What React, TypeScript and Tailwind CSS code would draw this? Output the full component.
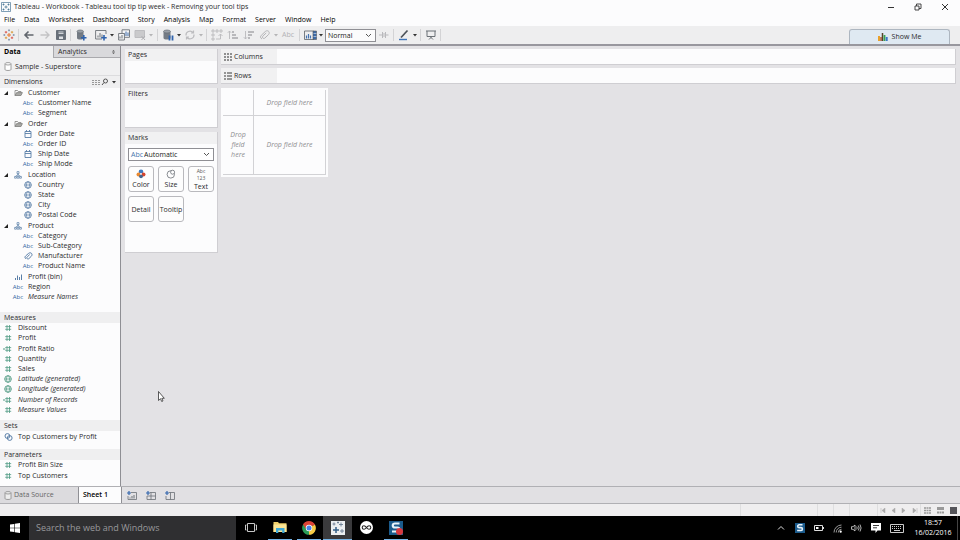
import React from 'react';

type FieldIcon = 'abc' | 'date' | 'globe' | 'geo' | 'folder' | 'tree' | 'clip' | 'bin' | 'num' | 'calc' | 'set';

interface Field {
    name: string;
    icon: FieldIcon;
    group?: boolean;
    child?: boolean;
    italic?: boolean;
}

const BLUE = '#5a7fa8';
const GREEN = '#4f9a83';

const dimensions: Field[] = [
    { name: 'Customer', icon: 'folder', group: true },
    { name: 'Customer Name', icon: 'abc', child: true },
    { name: 'Segment', icon: 'abc', child: true },
    { name: 'Order', icon: 'folder', group: true },
    { name: 'Order Date', icon: 'date', child: true },
    { name: 'Order ID', icon: 'abc', child: true },
    { name: 'Ship Date', icon: 'date', child: true },
    { name: 'Ship Mode', icon: 'abc', child: true },
    { name: 'Location', icon: 'tree', group: true },
    { name: 'Country', icon: 'globe', child: true },
    { name: 'State', icon: 'globe', child: true },
    { name: 'City', icon: 'globe', child: true },
    { name: 'Postal Code', icon: 'globe', child: true },
    { name: 'Product', icon: 'tree', group: true },
    { name: 'Category', icon: 'abc', child: true },
    { name: 'Sub-Category', icon: 'abc', child: true },
    { name: 'Manufacturer', icon: 'clip', child: true },
    { name: 'Product Name', icon: 'abc', child: true },
    { name: 'Profit (bin)', icon: 'bin' },
    { name: 'Region', icon: 'abc' },
    { name: 'Measure Names', icon: 'abc', italic: true },
];

const measures: Field[] = [
    { name: 'Discount', icon: 'num' },
    { name: 'Profit', icon: 'num' },
    { name: 'Profit Ratio', icon: 'calc' },
    { name: 'Quantity', icon: 'num' },
    { name: 'Sales', icon: 'num' },
    { name: 'Latitude (generated)', icon: 'geo', italic: true },
    { name: 'Longitude (generated)', icon: 'geo', italic: true },
    { name: 'Number of Records', icon: 'calc', italic: true },
    { name: 'Measure Values', icon: 'num', italic: true },
];

const parameters: Field[] = [
    { name: 'Profit Bin Size', icon: 'num' },
    { name: 'Top Customers', icon: 'num' },
];

const menus = ['File', 'Data', 'Worksheet', 'Dashboard', 'Story', 'Analysis', 'Map', 'Format', 'Server', 'Window', 'Help'];

function Svg({ w = 12, h = 12, color = '#6b7076', children }: { w?: number; h?: number; color?: string; children: React.ReactNode }) {
    return (
        <svg width={w} height={h} viewBox={`0 0 ${w} ${h}`} fill="none" stroke={color} className="shrink-0" aria-hidden="true">
            {children}
        </svg>
    );
}

function FieldGlyph({ icon }: { icon: FieldIcon }) {
    switch (icon) {
        case 'abc':
            return <span className="text-[6px] leading-none text-[#2f62a0]">Abc</span>;
        case 'date':
            return (
                <Svg w={8} h={8} color={BLUE}>
                    <path d="M1 1.5h6v6H1zM1 3.5h6M2.5 0v2M5.5 0v2" strokeWidth=".9" />
                </Svg>
            );
        case 'globe':
        case 'geo':
            return (
                <Svg w={8} h={8} color={icon === 'geo' ? GREEN : BLUE}>
                    <circle cx="4" cy="4" r="3.3" strokeWidth=".9" />
                    <ellipse cx="4" cy="4" rx="1.5" ry="3.3" strokeWidth=".7" />
                    <path d="M.7 4h6.6" strokeWidth=".7" />
                </Svg>
            );
        case 'folder':
            return (
                <Svg w={9} h={8} color="#80807e">
                    <path d="M1 6.5v-5h2.5l.8 1H7V4" strokeWidth=".8" />
                    <path d="M1 6.5L2.6 3.6h5.8L7 6.5z" fill="#a9a9a6" strokeWidth=".8" />
                </Svg>
            );
        case 'tree':
            return (
                <Svg w={8} h={8} color={BLUE}>
                    <path d="M3 .6h2v2H3zM.6 5.4h1.8v1.8H.6zM3.1 5.4h1.8v1.8H3.1zM5.6 5.4h1.8v1.8H5.6zM4 2.6v2.8M1.5 5.4L4 3.4l2.5 2" strokeWidth=".7" />
                </Svg>
            );
        case 'clip':
            return (
                <Svg w={9} h={8} color={BLUE}>
                    <path d="M2 6.9C.6 6 .8 4.8 1.6 4L4.4 1.5C5.6.5 7 .6 7.7 1.6c.6 1 .3 2-.5 2.8L4.9 6.6c-.7.6-1.7.4-2-.2-.4-.6-.1-1.2.4-1.6l2.4-2.2" />
                </Svg>
            );
        case 'bin':
            return (
                <Svg w={9} h={8} color={BLUE}>
                    <path d="M1.5 7V5M3.5 7V2.5M5.500 7V4M7.5 7V1.5" />
                </Svg>
            );
        case 'set':
            return (
                <Svg w={9} h={8} color={BLUE}>
                    <circle cx="3.4" cy="3" r="2.4" />
                    <circle cx="5.7" cy="5" r="2.4" />
                </Svg>
            );
        default:
            return (
                <Svg w={10} h={8} color={GREEN}>
                    <path d="M4 1v6M6.500 1v6M2.200 2.600h6M2.200 5.300h6" strokeWidth=".8" />
                    {icon === 'calc' && <path d="M0 4h2.2" strokeWidth="1" />}
                </Svg>
            );
    }
}

function FieldRow({ field, indent }: { field: Field; indent: boolean }) {
    return (
        <li className={`flex min-h-0 items-center ${field.child ? 'pl-[22px]' : indent ? 'pl-1' : 'pl-[2px]'}`}>
            {indent && !field.child && (
                <span className="w-2">
                    {field.group && (
                        <svg width="4" height="4" viewBox="0 0 4 4"><path d="M4 0v4H0z" fill="#222" /></svg>
                    )}
                </span>
            )}
            <span className="flex w-3 shrink-0 justify-center">
                <FieldGlyph icon={field.icon} />
            </span>
            <span className={`pl-1 whitespace-nowrap ${field.italic ? 'italic' : ''}`}>{field.name}</span>
        </li>
    );
}

function SectionTitle({ children }: { children: React.ReactNode }) {
    return <h2 className="flex h-[11px] shrink-0 items-center bg-[#efeff0] px-1">{children}</h2>;
}

function Tool({ label, children }: { label: string; children: React.ReactNode }) {
    return (
        <button aria-label={label} className="flex h-4 w-4 shrink-0 items-center justify-center">
            {children}
        </button>
    );
}

function Caret({ dim = false }: { dim?: boolean }) {
    return (
        <svg width="5" height="4" viewBox="0 0 5 4" className="shrink-0">
            <path d="M1 1h4L3 3.5z" fill={dim ? '#b4b4b6' : '#333'} />
        </svg>
    );
}

function Divider() {
    return <span className="mr-[2px] ml-px h-3 w-px shrink-0 bg-[#d3d3d5]" />;
}

function Chevron() {
    return (
        <svg width="7" height="5" viewBox="0 0 7 5" fill="none" className="pointer-events-none absolute top-1 right-1">
            <path d="M1 1l2.5 2.5L6 1" stroke="#555" />
        </svg>
    );
}

function Toolbar() {
    return (
        <div className="flex h-5 shrink-0 items-center border-b-2 border-[#98979e] bg-[#eeeeef] pl-px">
            <Tool label="Start page">
                <Svg>
                    <path d="M6 4v4M4 6h4" stroke="#e8762c" />
                    <path d="M3 2v2.4M1.8 3.2h2.4M9 7.6V10M7.8 8.8h2.4" stroke="#d9534a" strokeWidth=".9" />
                    <path d="M9 2v2.4M7.8 3.2h2.4M3 7.6V10M1.8 8.8h2.4" stroke="#d99a3a" strokeWidth=".9" />
                    <path d="M6 .3v2M5 1.3h2M6 9.7v2M5 10.7h2M1.3 5v2M.3 6h2M10.7 5v2M9.7 6h2" stroke="#6b82a0" strokeWidth=".7" />
                </Svg>
            </Tool>
            <Divider />
            <Tool label="Back">
                <Svg color="#62676e"><path d="M10.5 6H2M5.5 2.5L2 6l3.5 3.5" strokeWidth="1.6" /></Svg>
            </Tool>
            <Tool label="Forward">
                <Svg color="#c3c3c5"><path d="M1.5 6H10M6.5 2.5L10 6 6.5 9.5" strokeWidth="1.4" /></Svg>
            </Tool>
            <Tool label="Save">
                <Svg w={10} h={10}>
                    <path d="M.5.5h9v9h-9z" fill="#68707a" stroke="#68707a" />
                    <path d="M2.5 2h5M2.5 3.5h5" stroke="#cfd3d8" />
                    <path d="M3 6.5h4V9H3z" fill="#dde0e4" stroke="none" />
                </Svg>
            </Tool>
            <Divider />
            <Tool label="New data source">
                <Svg>
                    <path d="M2 2.5V9c0 2 6.500 2 6.500 0V2.5" fill="#747b84" stroke="none" />
                    <ellipse cx="5.2" cy="2.5" rx="3.2" ry="1.5" fill="#9aa0a7" stroke="#636a73" strokeWidth=".7" />
                    <path d="M8.800 6v5.500M6 8.800h5.500" stroke="#2f63ad" strokeWidth="1.6" />
                </Svg>
            </Tool>
            <span className="w-1" />
            <Tool label="New worksheet">
                <Svg>
                    <path d="M11 5V1.5H.6V10H7" strokeWidth=".9" />
                    <path d="M3 8.500v-2M5 8.500V4M7 8.500V5.500" />
                    <path d="M9 6v5.500M6.200 8.800h5.500" stroke="#2f63ad" strokeWidth="1.6" />
                </Svg>
            </Tool>
            <Caret />
            <span className="w-[2px]" />
            <Tool label="Duplicate sheet">
                <Svg>
                    <path d="M4 .8h7.500v7.500H4z" fill="#f6f6f7" strokeWidth=".9" />
                    <path d="M6 7V4M8 7V2.500M10 7V3.500" stroke="#3d6ba8" />
                    <path d="M.6 4.500h5.800v6.500H.6z" fill="#f6f6f7" strokeWidth=".9" />
                    <path d="M2 9.500V7.500M4 9.500V6" />
                </Svg>
            </Tool>
            <Tool label="Clear sheet">
                <Svg color="#bdbdc0">
                    <path d="M1 1.5h9.5v7H1z" fill="#cacacc" />
                    <path d="M7.500 7l3.500 4M11 7l-3.500 4" stroke="#b0b0b3" />
                </Svg>
            </Tool>
            <Caret dim />
            <span className="w-[3px]" />
            <Divider />
            <Tool label="Pause updates">
                <Svg>
                    <path d="M1.500 2.500V9c0 2 7 2 7 0V2.500" fill="#747b84" stroke="none" />
                    <ellipse cx="5" cy="2.5" rx="3.4" ry="1.5" fill="#9aa0a7" stroke="#636a73" strokeWidth=".7" />
                    <path d="M7.500 6.500v5M10.500 6.500v5" stroke="#2f63ad" strokeWidth="1.8" />
                </Svg>
            </Tool>
            <Caret />
            <span className="w-px" />
            <Tool label="Run update">
                <Svg color="#bcbcbf">
                    <path d="M2 6.500a4 4 0 0 1 7-3M10 5.500a4 4 0 0 1-7 3M9.500 1.500V4H7M2.500 10.500V8H5" strokeWidth="1.2" />
                </Svg>
            </Tool>
            <Caret dim />
            <span className="w-[2px]" />
            <Divider />
            <Tool label="Swap rows and columns">
                <Svg color="#b9b9bc">
                    <path d="M1 1h2v2H1zM5 1h2v2H5zM9 1h2v2H9zM1 5h2v2H1zM1 9h2v2H1zM5 10h4.500V5M7.500 7l2-2 2 2" strokeWidth=".9" />
                </Svg>
            </Tool>
            <Tool label="Sort ascending">
                <Svg color="#b9b9bc">
                    <path d="M2.500 10V2M.8 3.800L2.500 2l1.700 1.800" strokeWidth=".9" />
                    <path d="M5 3h2M5 6h4M5 9h6" strokeWidth="1.8" />
                </Svg>
            </Tool>
            <Tool label="Sort descending">
                <Svg color="#b9b9bc">
                    <path d="M2.500 2v8M.8 8.200L2.500 10l1.700-1.800" strokeWidth=".9" />
                    <path d="M5 3h6M5 6h4M5 9h2" strokeWidth="1.8" />
                </Svg>
            </Tool>
            <Tool label="Group members">
                <Svg color="#b4b4b7">
                    <path d="M3 10C1 9 1.300 7.300 2.300 6.300l4-3.800c1.300-1.200 3-.8 3.600.2.700 1.200.2 2.300-.6 3.100l-3.500 3.300c-.8.700-1.900.3-2.200-.3-.3-.8 0-1.500.5-2l3.100-2.800" />
                </Svg>
            </Tool>
            <Caret dim />
            <span className="w-[2px]" />
            <Tool label="Show mark labels">
                <span className="text-[7px] text-[#b2b2b5]">Abc</span>
            </Tool>
            <span className="w-[2px]" />
            <Divider />
            <Tool label="Show cards">
                <Svg w={13} h={10}>
                    <path d="M.5 1h9v8.500h-9z" strokeWidth=".9" />
                    <path d="M2.500 8.500v-3M4.500 8.500V4M6.500 8.500V5.500" stroke="#4474b2" strokeWidth="1.2" />
                    <path d="M9 1h3.500v8.500H9z" fill="#3d6ba8" stroke="#555" strokeWidth=".6" />
                    <path d="M9.500 3.500h3M9.500 6.500h3" stroke="#ccd6e4" strokeWidth=".7" />
                </Svg>
            </Tool>
            <Caret />
            <span className="w-[2px]" />
            <span className="relative">
                <select aria-label="Fit" className="block h-[13px] w-[51px] appearance-none border border-[#8f8f94] bg-[#fbfbfc] pl-[2px] text-[7px] leading-[9px] text-[#222]">
                    <option>Normal</option>
                    <option>Fit Width</option>
                    <option>Fit Height</option>
                    <option>Entire View</option>
                </select>
                <Chevron />
            </span>
            <Tool label="Fix axes">
                <Svg w={10} h={8} color="#b9b9bc"><path d="M0 4h3M3.500 1v6M3.500 3h3v2h-3M6.500 4h3M6.500 1v6" /></Svg>
            </Tool>
            <Divider />
            <Tool label="Highlight">
                <Svg>
                    <path d="M3 8.500L9.500 1.500" stroke="#4b5158" strokeWidth="1.7" />
                    <path d="M1 10.500h8" stroke="#3f74b8" strokeWidth="1.4" />
                </Svg>
            </Tool>
            <Caret />
            <span className="w-[2px]" />
            <Divider />
            <Tool label="Presentation mode">
                <Svg w={10} h={10}><path d="M0 1h10M1 1v5.500h8V1M5 6.500V8M3 9.500L5 7.500l2 2" /></Svg>
            </Tool>
            <Divider />
            <button className="mr-[10px] ml-auto flex h-[15px] w-[101px] items-center justify-center gap-1 self-end rounded-t-[3px] border border-b-0 border-[#adb6c0] bg-[#dfe9f2]">
                <Svg w={10} h={8}>
                    <path d="M1 8V3" stroke="#e9a12c" strokeWidth="2" />
                    <path d="M3 8V4" stroke="#b85228" strokeWidth="1.4" />
                    <path d="M4.500 8V0" stroke="#554428" strokeWidth="1.5" />
                    <path d="M6.500 8V2" stroke="#39a253" strokeWidth="1.8" />
                    <path d="M8.700 8V4" stroke="#3d79c8" strokeWidth="2" />
                </Svg>
                Show Me
            </button>
        </div>
    );
}

function DataPane() {
    return (
        <aside className="flex w-[121px] shrink-0 flex-col border-r border-[#8f8f94] bg-[#fcfcfd]">
            <div className="flex h-3 shrink-0 bg-[#f0f0f1]">
                <button className="w-[53px] pl-1 text-left font-bold text-black">Data</button>
                <button className="flex flex-1 items-center justify-between border-b border-l border-[#a9a9ad] bg-[#d9d9dc] px-1">
                    Analytics
                    <svg width="5" height="6" viewBox="0 0 5 6"><path d="M1 2.500L2.500 1 4 2.500zM1 3.500L2.500 5 4 3.500z" fill="#555" /></svg>
                </button>
            </div>
            <div className="flex h-[18px] shrink-0 items-center border-b border-[#dcdcde] bg-[#f0f0f1] pl-1">
                <Svg w={8} h={9} color="#888">
                    <path d="M1 2v5.500c0 1.300 6 1.300 6 0V2" fill="#fff" strokeWidth=".8" />
                    <ellipse cx="4" cy="1.8" rx="3" ry="1.2" fill="#fff" strokeWidth=".8" />
                </Svg>
                <span className="pl-[3px]">Sample - Superstore</span>
            </div>
            <div className="flex h-3 shrink-0 items-center bg-[#efeff0] px-1">
                <h2 className="flex-1">Dimensions</h2>
                <button aria-label="View data" className="w-[9px]">
                    <Svg w={8} h={7} color="#999"><path d="M0 1.500h8M0 3.500h8M0 5.500h8" strokeDasharray="2 1" /></Svg>
                </button>
                <button aria-label="Find field" className="w-[10px]">
                    <Svg w={8} h={8} color="#555"><circle cx="4.5" cy="3" r="2" /><path d="M3 4.500L1 7" /></Svg>
                </button>
                <Caret />
            </div>
            <ul className="grid h-[214px] shrink-0 auto-rows-fr">
                {dimensions.map(f => <FieldRow key={f.name} field={f} indent />)}
            </ul>
            <div className="flex-1" />
            <SectionTitle>Measures</SectionTitle>
            <ul className="mb-[5px] grid h-[92px] shrink-0 auto-rows-fr">
                {measures.map(f => <FieldRow key={f.name} field={f} indent={false} />)}
            </ul>
            <SectionTitle>Sets</SectionTitle>
            <ul className="mb-[6px] grid h-3 shrink-0">
                <FieldRow field={{ name: 'Top Customers by Profit', icon: 'set' }} indent={false} />
            </ul>
            <SectionTitle>Parameters</SectionTitle>
            <ul className="mb-[5px] grid h-[21px] shrink-0 auto-rows-fr">
                {parameters.map(f => <FieldRow key={f.name} field={f} indent={false} />)}
            </ul>
        </aside>
    );
}

function Card({ title, className, children }: { title: string; className: string; children?: React.ReactNode }) {
    return (
        <section className={`border-r border-b border-[#cfced2] bg-[#fcfcfd] ${className}`}>
            <h2 className="flex h-3 items-center bg-[#f1f1f2] pl-[3px]">{title}</h2>
            {children}
        </section>
    );
}

function MarkButton({ label, children }: { label: string; children?: React.ReactNode }) {
    return (
        <button className="flex h-[26px] flex-col items-center justify-center rounded-[3px] border border-[#b9b9bd] bg-[#fdfdfd] leading-[9px]">
            {children}
            <span>{label}</span>
        </button>
    );
}

function MarksCard() {
    return (
        <Card title="Marks" className="h-[121px]">
            <div className="px-[3px] pt-1">
                <div className="relative">
                    <span className="pointer-events-none absolute top-[2px] left-[3px] text-[7px] leading-[9px] text-[#4a78ad]">Abc</span>
                    <select aria-label="Mark type" className="block h-[13px] w-full appearance-none border border-[#8f8f94] bg-white pl-[15px] text-[7px] leading-[9px] text-[#222]">
                        <option>Automatic</option>
                        <option>Bar</option>
                        <option>Line</option>
                    </select>
                    <Chevron />
                </div>
                <div className="mt-[5px] grid grid-cols-3 gap-1">
                    <MarkButton label="Color">
                        <Svg w={10} h={11}>
                            <circle cx="5" cy="2.8" r="2.3" fill="#3f7ac0" stroke="none" />
                            <circle cx="2.6" cy="5.5" r="2.1" fill="#e98a32" stroke="none" />
                            <circle cx="7.4" cy="5.5" r="2.1" fill="#d4452f" stroke="none" />
                            <circle cx="5" cy="7.3" r="1.9" fill="#44658f" stroke="none" />
                            <circle cx="5" cy="4.8" r=".9" fill="#fff" stroke="none" />
                        </Svg>
                    </MarkButton>
                    <MarkButton label="Size">
                        <Svg w={10} h={11}>
                            <circle cx="4.8" cy="5.4" r="3.7" strokeWidth=".8" />
                            <circle cx="6.6" cy="3.2" r="2" fill="#fff" strokeWidth=".8" />
                        </Svg>
                    </MarkButton>
                    <MarkButton label="Text">
                        <span className="flex flex-col text-[5px] leading-[7px] text-[#555]">
                            <span>Abc</span>
                            <span>123</span>
                        </span>
                    </MarkButton>
                    <MarkButton label="Detail" />
                    <MarkButton label="Tooltip" />
                </div>
            </div>
        </Card>
    );
}

function Shelf({ label, children }: { label: string; children: React.ReactNode }) {
    return (
        <div className="flex h-4 border-r border-b border-[#cfced2] bg-[#fcfcfd]">
            <div className="flex w-14 items-center gap-[2px] bg-[#f1f1f2] pl-[3px]">
                {children}
                {label}
            </div>
        </div>
    );
}

function Workspace() {
    return (
        <main className="flex min-w-0 flex-1 gap-[3px] bg-[#e3e2e5] px-1 pt-[3px]">
            <div className="flex w-[93px] shrink-0 flex-col gap-1">
                <Card title="Pages" className="h-[35px]" />
                <Card title="Filters" className="h-10" />
                <MarksCard />
            </div>
            <div className="flex min-w-0 flex-1 flex-col gap-[3px]">
                <Shelf label="Columns">
                    <Svg w={8} h={8} color="#777"><path d="M1 0v8M4 0v8M7 0v8" strokeWidth="1.6" strokeDasharray="2 1" /></Svg>
                </Shelf>
                <Shelf label="Rows">
                    <Svg w={8} h={8} color="#777"><path d="M0 1h2M3 1h5M0 4h2M3 4h5M0 7h2M3 7h5" strokeWidth="1.4" /></Svg>
                </Shelf>
                <div className="mt-px grid h-[89px] w-[107px] grid-cols-[31px_1fr] grid-rows-[26px_1fr] border-2 border-[#fcfcfd] bg-[#fcfcfd] text-center text-[#8d8d90] italic">
                    <div className="border-r border-b border-[#d2d2d5]" />
                    <div className="flex items-center justify-center border-r border-b border-[#d2d2d5]">Drop field here</div>
                    <div className="flex items-center justify-center border-r border-b border-[#d2d2d5] px-1 leading-[10px]">Drop field here</div>
                    <div className="flex items-center justify-center border-r border-b border-[#d2d2d5]">Drop field here</div>
                </div>
            </div>
        </main>
    );
}

function SheetTabs() {
    return (
        <div className="flex h-[18px] shrink-0 items-stretch border-t border-b border-[#b0b0b4] bg-[#e1e0e3]">
            <button className="flex w-[79px] items-center gap-[2px] border-r border-[#8f8f94] bg-[#dcdbde] pl-1 text-[#666]">
                <Svg w={8} h={9} color="#888">
                    <path d="M1 2v5.500c0 1.300 6 1.300 6 0V2" fill="#eee" strokeWidth=".8" />
                    <ellipse cx="4" cy="1.8" rx="3" ry="1.2" fill="#eee" strokeWidth=".8" />
                </Svg>
                Data Source
            </button>
            <button className="w-[43px] border-r border-[#8f8f94] bg-[#fcfcfd] pl-1 text-left font-semibold text-black">Sheet 1</button>
            <div className="flex items-center gap-[9px] pl-[5px]">
                {['New worksheet', 'New dashboard', 'New story'].map((label, i) => (
                    <button key={label} aria-label={label}>
                        <Svg w={10} h={9}>
                            <path d="M4 1.500h5.500v7H1V5" strokeWidth=".8" />
                            <path d="M2 0v4M0 2h4" stroke="#3567ad" strokeWidth="1.2" />
                            {i === 0 && <path d="M3 7.500v-1M5 7.500V5M7 7.500V4" />}
                            {i === 1 && <path d="M5 1.500v7M1 5h8.500" strokeWidth=".8" />}
                            {i === 2 && <path d="M5.500 1.500v7" strokeWidth=".8" />}
                        </Svg>
                    </button>
                ))}
            </div>
        </div>
    );
}

function StatusBar() {
    return (
        <div className="flex h-3 shrink-0 items-center justify-end bg-[#efeeef]">
            <span className="h-full w-[77px] border-l border-[#dededf]" />
            <span className="h-full w-4 border-l border-[#dededf]" />
            <span className="h-full w-4 border-l border-[#dededf]" />
            <span className="h-full w-7 border-l border-[#dededf]" />
            <div className="flex h-full w-[43px] items-center justify-around border-l border-[#dededf]">
                {['M1 0v5M5 0v5L2 2.5z', 'M4 0v5L1 2.5z', 'M1 0v5l3-2.5z', 'M1 0v5l3-2.5zM5 0v5'].map(d => (
                    <Svg key={d} w={6} h={5} color="#aaa"><path d={d} fill="#aaa" strokeWidth=".5" /></Svg>
                ))}
            </div>
            <div className="flex h-full w-10 items-center justify-around border-l border-[#dededf]">
                <Svg w={7} h={7} color="#999"><path d="M0 1h7M0 3.500h7M0 6h7" strokeWidth="1.5" strokeDasharray="2 .5" /></Svg>
                <Svg w={7} h={7} color="#999"><path d="M0 1.500h7" strokeWidth="3" /><path d="M0 5.500h7" strokeWidth="2" strokeDasharray="2 .5" /></Svg>
                <span className="h-[7px] w-[7px] bg-[#55555a]" />
            </div>
        </div>
    );
}

function Task({ label, running = false, active = false, children }: { label: string; running?: boolean; active?: boolean; children: React.ReactNode }) {
    return (
        <button aria-label={label} className={`flex w-[29px] flex-col items-center ${active ? 'bg-[#3a3a3c]' : ''}`}>
            <span className="flex flex-1 items-center">{children}</span>
            <span className={`h-px ${active ? 'w-full' : 'w-6'} ${running ? 'bg-[#76b5e8]' : ''}`} />
        </button>
    );
}

function SnagitIcon({ size, badge = false }: { size: number; badge?: boolean }) {
    return (
        <svg width={size} height={size} viewBox="0 0 14 14" fill="none">
            <path d="M0 0h14v14H0z" fill="#1b5b8c" />
            <path d="M10.500 2.500H6c-3 0-3 4 0 4h2.500c2.500 0 2.500 4 0 4H3" stroke="#e9f3fa" strokeWidth="2.2" />
            {badge && <circle cx="10.5" cy="10.5" r="3.5" fill="#d9383f" />}
        </svg>
    );
}

function Tray({ label, children }: { label: string; children: React.ReactNode }) {
    return <button aria-label={label} className="flex w-[19px] items-center justify-center">{children}</button>;
}

function Taskbar() {
    return (
        <footer className="flex h-6 shrink-0 bg-black text-white">
            <button aria-label="Start" className="flex w-[29px] items-center justify-center">
                <svg width="10" height="10" viewBox="0 0 10 10" fill="#fff">
                    <path d="M0 1.500l4.200-.6v3.800H0zM4.800.8L10 0v4.700H4.800zM0 5.300h4.200v3.800L0 8.500zM4.800 5.300H10V10l-5.200-.8z" />
                </svg>
            </button>
            <input
                type="text"
                aria-label="Search"
                placeholder="Search the web and Windows"
                className="w-[207px] bg-[#2f2f31] px-[7px] text-[9px] text-white placeholder:text-[#98989b]"
            />
            <Task label="Task view">
                <Svg w={12} h={9} color="#ddd"><path d="M2.500.5h7v8h-7zM1.500 2H.5v5h1M10.500 2h1v5h-1" strokeWidth=".9" /></Svg>
            </Task>
            <Task label="File Explorer" running>
                <svg width="14" height="13" viewBox="0 0 14 13">
                    <path d="M.5 1H5l1 1.200h7.500V11H.5z" fill="#f0cf6a" />
                    <path d="M.5 3.500h13V11H.5z" fill="#fbe596" />
                    <path d="M3 7h8.500v5H9.200V9.500H5.300V12H3z" fill="#3fa9d8" />
                </svg>
            </Task>
            <Task label="Chrome" running>
                <svg width="14" height="14" viewBox="0 0 14 14">
                    <path d="M7 7L1.100 3.600A6.800 6.800 0 0 1 12.900 3.600z" fill="#db4437" />
                    <path d="M7 7L1.100 3.600A6.800 6.800 0 0 0 7 13.800z" fill="#2b9d58" />
                    <path d="M7 7l5.900-3.400A6.800 6.800 0 0 1 7 13.800z" fill="#f7cb45" />
                    <path d="M7 3.900h5.900A6.800 6.800 0 0 0 1.100 3.600L4 8z" fill="#db4437" />
                    <circle cx="7" cy="7" r="3.2" fill="#fff" />
                    <circle cx="7" cy="7" r="2.5" fill="#4a82e8" />
                </svg>
            </Task>
            <Task label="Tableau" running active>
                <Svg w={14} h={14} color="#6b7e93">
                    <path d="M0 0h14v14H0z" fill="#eceff1" stroke="none" />
                    <path d="M5 6v6M2 9h6" stroke="#346087" strokeWidth="1.5" />
                    <path d="M3 1.500v3M1.500 3h3M10 1.500v4M8 3.500h4M11 8v4M9 10h4M7 .5v2M6 1.500h2" strokeWidth=".9" />
                </Svg>
            </Task>
            <Task label="Camtasia">
                <Svg w={13} h={13} color="#222">
                    <circle cx="6.5" cy="6.5" r="6.5" fill="#fff" stroke="none" />
                    <path d="M6.500 6.500C5.300 5 4.700 4.700 4 4.700a1.800 1.800 0 0 0 0 3.600c.7 0 1.300-.3 2.500-1.800S8.300 4.700 9 4.700a1.800 1.800 0 0 1 0 3.600c-.7 0-1.300-.3-2.500-1.800z" strokeWidth="1.1" />
                </Svg>
            </Task>
            <Task label="Snagit" running><SnagitIcon size={14} badge /></Task>
            <div className="ml-auto flex">
                <Tray label="Show hidden icons"><Svg w={8} h={6} color="#ddd"><path d="M1 4.500l3-3 3 3" /></Svg></Tray>
                <Tray label="Snagit"><SnagitIcon size={10} /></Tray>
                <Tray label="Battery">
                    <Svg w={10} h={6} color="#ddd"><path d="M.5.5h8v5h-8zM9.500 2v2" /><path d="M2 2h2.500v2H2z" fill="#fff" stroke="none" /></Svg>
                </Tray>
                <Tray label="Network">
                    <Svg w={9} h={9} color="#999">
                        <path d="M1 8.500A7.500 7.500 0 0 1 8.500 1M3.200 8.500a5.300 5.300 0 0 1 5.300-5.300M5.300 8.500a3.200 3.200 0 0 1 3.200-3.200" />
                        <circle cx="7.7" cy="7.7" r="1.1" fill="#fff" stroke="none" />
                    </Svg>
                </Tray>
                <Tray label="Volume">
                    <Svg w={11} h={8} color="#ddd"><path d="M.5 2.700H2L4 1v6L2 5.300H.5zM5.700 2.500q1 1.500 0 3M7.300 1.500q1.700 2.500 0 5M9 .5q2.200 3.500 0 7" strokeWidth=".8" /></Svg>
                </Tray>
                <Tray label="Notifications">
                    <Svg w={10} h={10} color="#222">
                        <path d="M0 0h10v7.500H6.500L4.500 10V7.500H0z" fill="#fff" stroke="none" />
                        <path d="M2 2.500h6M2 4.800h4" strokeWidth=".9" />
                    </Svg>
                </Tray>
                <button aria-label="Touch keyboard" className="flex w-6 items-center justify-center">
                    <Svg w={14} h={9} color="#ccc">
                        <path d="M.5.5h13v8H.5z" />
                        <path d="M2 2.500h10M2 4.500h10" strokeDasharray="1 1" />
                        <path d="M4 6.500h6" />
                    </Svg>
                </button>
                <button className="flex w-[48px] flex-col items-center justify-center text-[7px] leading-[10px]">
                    <span>18:57</span>
                    <span>16/02/2016</span>
                </button>
                <span className="w-[3px] border-l border-[#444]" />
            </div>
        </footer>
    );
}

export default function App() {
    return (
        <div className="flex h-screen flex-col overflow-hidden bg-[#fcfcfd] font-['Open_Sans','Noto_Sans',sans-serif] text-[7px] leading-[10px] text-[#2a2a2c]">
            <header className="flex h-[13px] shrink-0 items-center pl-px">
                <Svg w={10} h={10} color="#4a7796">
                    <path d="M.5.5h9v9h-9z" strokeWidth=".7" />
                    <path d="M5 3.500v3M3.500 5h3M2.500 1.500v2M1.500 2.500h2M7.500 1.500v2M6.500 2.500h2M2.500 6.500v2M1.500 7.500h2M7.500 6.500v2M6.500 7.500h2" strokeWidth=".8" />
                </Svg>
                <h1 className="pl-[3px]">Tableau - Workbook - Tableau tool tip tip week - Removing your tool tips</h1>
                <div className="mr-[9px] ml-auto flex gap-[17px]">
                    <button aria-label="Minimize" className="w-[10px]"><Svg w={8} h={8} color="#333"><path d="M1 4.500h6" /></Svg></button>
                    <button aria-label="Restore" className="w-[10px]"><Svg w={8} h={8} color="#333"><path d="M1 3h4v4H1zM2.500 3V1H7v4.500H5" strokeWidth=".9" /></Svg></button>
                    <button aria-label="Close" className="w-[10px]"><Svg w={8} h={8} color="#333"><path d="M1 1l6 6M7 1L1 7" /></Svg></button>
                </div>
            </header>
            <nav className="flex h-[13px] shrink-0 items-center gap-[9px] pl-1 text-black">
                {menus.map(m => <button key={m}>{m}</button>)}
            </nav>
            <Toolbar />
            <div className="flex min-h-0 flex-1">
                <DataPane />
                <Workspace />
            </div>
            <SheetTabs />
            <StatusBar />
            <Taskbar />
            <svg width="7" height="11" viewBox="0 0 7 11" className="pointer-events-none absolute top-[391px] left-[158px]">
                <path d="M.5.5v9l2-1.800 1.200 2.800 1.300-.6-1.200-2.600h2.500z" fill="#fff" stroke="#333" strokeWidth=".8" />
            </svg>
        </div>
    );
}
